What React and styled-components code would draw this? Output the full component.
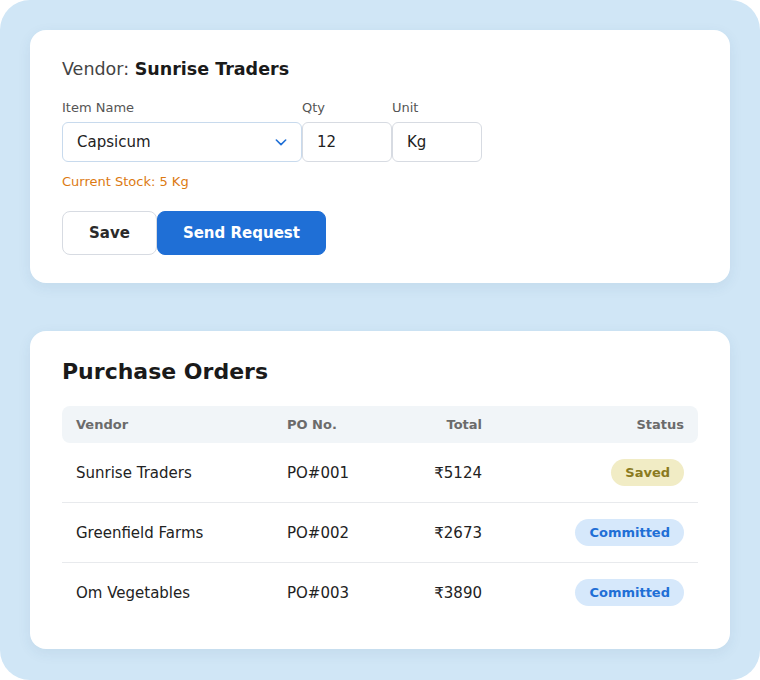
import React from "react";
import styled, { createGlobalStyle } from "styled-components";

const GlobalStyle = createGlobalStyle`
  html, body {
    margin: 0;
    padding: 0;
    background: #ffffff;
  }
  body {
    font-family: "DejaVu Sans", "Liberation Sans", sans-serif;
    color: #1f1f1f;
  }
`;

const orders = [
  { vendor: "Sunrise Traders", po: "PO#001", total: "₹5124", status: "Saved" },
  { vendor: "Greenfield Farms", po: "PO#002", total: "₹2673", status: "Committed" },
  { vendor: "Om Vegetables", po: "PO#003", total: "₹3890", status: "Committed" },
];

const App = () => {
  return (
    <>
      <GlobalStyle />
      <Page>
        <Card $pad="28px 32px 28px">
          <VendorLine>
            Vendor: <strong>Sunrise Traders</strong>
          </VendorLine>
          <FieldRow>
            <Field>
              <Label>Item Name</Label>
              <Select>
                <span>Capsicum</span>
                <svg width="16" height="16" viewBox="0 0 24 24" fill="none" stroke="#1f6fd6" strokeWidth="2.4" strokeLinecap="round" strokeLinejoin="round">
                  <path d="M5 9l7 7 7-7" />
                </svg>
              </Select>
            </Field>
            <Field>
              <Label>Qty</Label>
              <Input>12</Input>
            </Field>
            <Field>
              <Label>Unit</Label>
              <Input>Kg</Input>
            </Field>
          </FieldRow>
          <StockNote>Current Stock: 5 Kg</StockNote>
          <Actions>
            <Button>Save</Button>
            <Button $primary>Send Request</Button>
          </Actions>
        </Card>

        <Card $pad="26px 32px 27px">
          <Title>Purchase Orders</Title>
          <Table>
            <colgroup>
              <col style={{ width: 211 }} />
              <col style={{ width: 125 }} />
              <col style={{ width: 98 }} />
              <col />
            </colgroup>
            <thead>
              <tr>
                <Th>Vendor</Th>
                <Th>PO No.</Th>
                <Th $right>Total</Th>
                <Th $right>Status</Th>
              </tr>
            </thead>
            <tbody>
              {orders.map((o, i) => (
                <Row key={o.po} $last={i === orders.length - 1}>
                  <Td>{o.vendor}</Td>
                  <Td>{o.po}</Td>
                  <Td $right>{o.total}</Td>
                  <Td $right>
                    <Badge $status={o.status}>{o.status}</Badge>
                  </Td>
                </Row>
              ))}
            </tbody>
          </Table>
        </Card>
      </Page>
    </>
  );
};

const Page = styled.div`
  box-sizing: border-box;
  width: 760px;
  height: 680px;
  background: #d0e6f6;
  border-radius: 30px;
  padding: 30px;
  display: flex;
  flex-direction: column;
  gap: 48px;
`;

const Card = styled.div`
  background: #ffffff;
  border-radius: 16px;
  padding: ${(p) => p.$pad};
  box-shadow: 0 4px 14px rgba(40, 80, 120, 0.08);
`;

const VendorLine = styled.div`
  font-size: 17.5px;
  color: #444;
  line-height: 22px;

  strong {
    color: #1a1a1a;
    font-weight: 700;
  }
`;

const FieldRow = styled.div`
  display: grid;
  grid-template-columns: 240px 90px 90px;
  margin-top: 20px;
`;

const Field = styled.div`
  display: flex;
  flex-direction: column;
  gap: 6px;
`;

const Label = styled.label`
  font-size: 13px;
  color: #555;
  line-height: 16px;
`;

const Input = styled.div`
  box-sizing: border-box;
  height: 40px;
  border: 1px solid #d7dbe2;
  border-radius: 6px;
  padding: 0 14px;
  display: flex;
  align-items: center;
  font-size: 15px;
  color: #222;
`;

const Select = styled(Input)`
  justify-content: space-between;
  border-color: #c8daed;
  padding-right: 12px;
`;

const StockNote = styled.div`
  margin-top: 12px;
  font-size: 13px;
  color: #dc7a12;
  line-height: 16px;
`;

const Actions = styled.div`
  display: flex;
  margin-top: 21px;
`;

const Button = styled.button`
  box-sizing: border-box;
  height: 44px;
  padding: 0 ${(p) => (p.$primary ? "25px" : "26px")};
  border-radius: 8px;
  font-family: "DejaVu Sans", sans-serif;
  font-size: 15px;
  font-weight: 700;
  cursor: pointer;
  border: 1px solid ${(p) => (p.$primary ? "#1f6fd6" : "#d7dbe2")};
  background: ${(p) => (p.$primary ? "#1f6fd6" : "#ffffff")};
  color: ${(p) => (p.$primary ? "#ffffff" : "#2a2a2a")};
`;

const Title = styled.h2`
  margin: 0 0 19px;
  font-size: 22px;
  font-weight: 700;
  color: #1a1a1a;
  line-height: 30px;
`;

const Table = styled.table`
  width: 100%;
  border-collapse: separate;
  border-spacing: 0;
  table-layout: fixed;
`;

const Th = styled.th`
  background: #f1f5f8;
  height: 37px;
  padding: 0 14px;
  font-size: 13px;
  font-weight: 700;
  color: #6b6b6b;
  text-align: ${(p) => (p.$right ? "right" : "left")};

  &:first-child {
    border-radius: 8px 0 0 8px;
  }
  &:last-child {
    border-radius: 0 8px 8px 0;
  }
`;

const Row = styled.tr`
  td {
    border-bottom: ${(p) => (p.$last ? "none" : "1px solid #e8eaed")};
  }
`;

const Td = styled.td`
  height: 59px;
  padding: 0 14px;
  font-size: 15px;
  color: #222;
  text-align: ${(p) => (p.$right ? "right" : "left")};
`;

const badgeColors = {
  Saved: { bg: "#f1ecc5", fg: "#8a7a1e" },
  Committed: { bg: "#d6e8fb", fg: "#1f6fd6" },
};

const Badge = styled.span`
  display: inline-block;
  height: 27px;
  line-height: 27px;
  padding: 0 14px;
  border-radius: 14px;
  font-size: 13px;
  font-weight: 700;
  background: ${(p) => badgeColors[p.$status].bg};
  color: ${(p) => badgeColors[p.$status].fg};
`;

export default App;
